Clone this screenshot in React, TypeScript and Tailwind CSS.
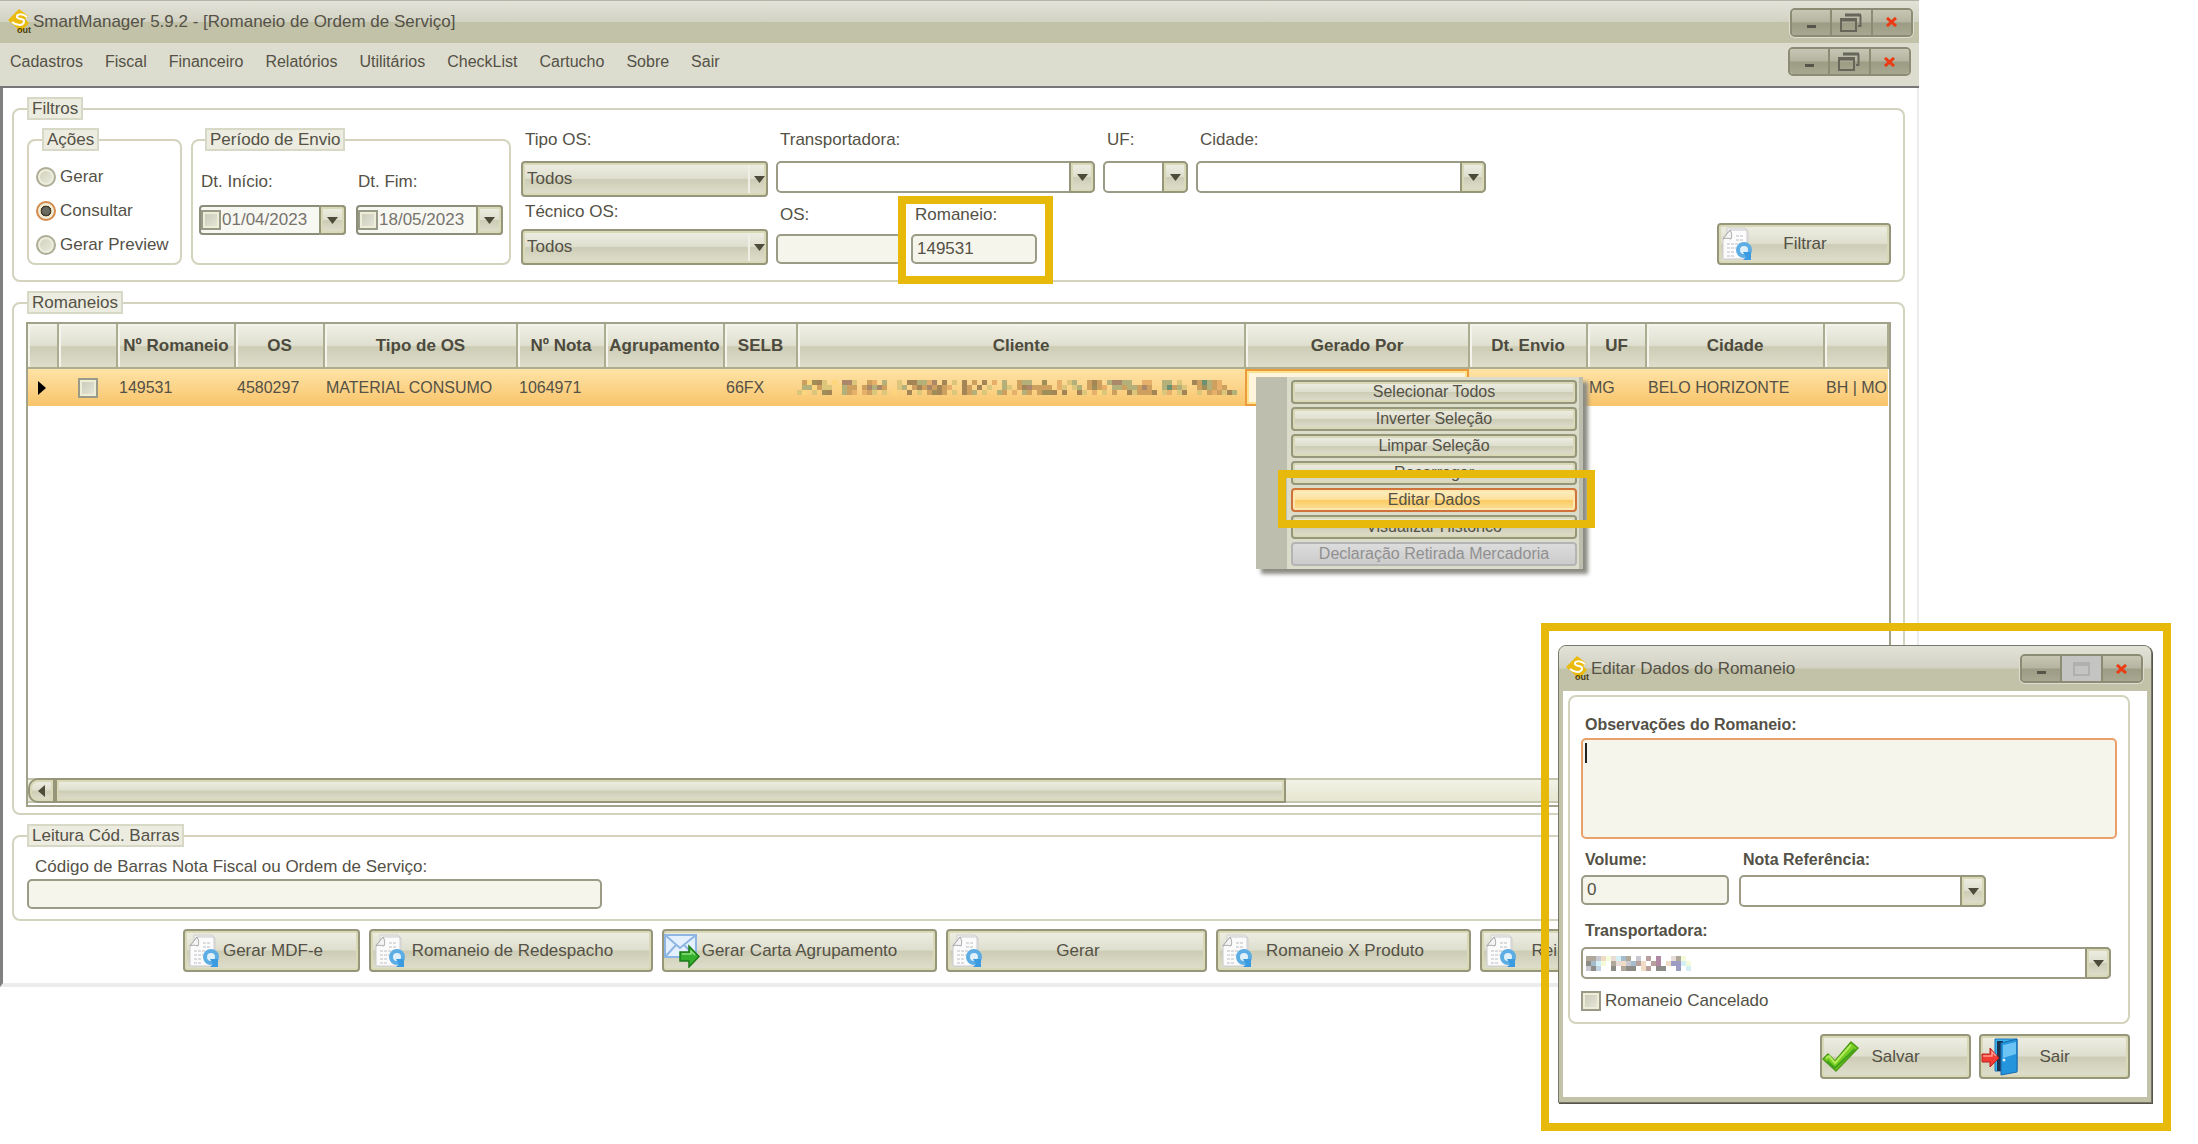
import { ReactNode, useState } from "react";
import clsx from "clsx";

const MENU = [
  "Cadastros",
  "Fiscal",
  "Financeiro",
  "Relatórios",
  "Utilitários",
  "CheckList",
  "Cartucho",
  "Sobre",
  "Sair",
];

const COLUMNS = [
  { label: "", width: "w-[30px]" },
  { label: "", width: "w-[59px]" },
  { label: "Nº Romaneio", width: "w-[118px]" },
  { label: "OS", width: "w-[89px]" },
  { label: "Tipo de OS", width: "w-[193px]" },
  { label: "Nº Nota", width: "w-[88px]" },
  { label: "Agrupamento", width: "w-[119px]" },
  { label: "SELB", width: "w-[73px]" },
  { label: "Cliente", width: "w-[448px]" },
  { label: "Gerado Por", width: "w-[224px]" },
  { label: "Dt. Envio", width: "w-[118px]" },
  { label: "UF", width: "w-[59px]" },
  { label: "Cidade", width: "w-[178px]" },
  { label: "", width: "" },
];

const CONTEXT_MENU = [
  "Selecionar Todos",
  "Inverter Seleção",
  "Limpar Seleção",
  "Recarregar",
  "Editar Dados",
  "Visualizar Histórico",
  "Declaração Retirada Mercadoria",
];

const face =
  "border-2 border-[#96967a] bg-[linear-gradient(#eeeee4,#dfdfcf_48%,#cdcdb6_52%,#dfdfce)] shadow-[inset_0_0_0_2px_#d9d9b8]";
const field =
  "block w-full rounded-[5px] border-2 border-[#9b9b86] px-1 text-[17px] text-[#545146] outline-none";

const MOSAIC_ROWS = [
  ".tyobl.y.rrl..ta.g..l.bbggar.b.l.b.t.b.a.g..tgg..o..a.lg..tbt.grrgg..aa..gg.l..btegta...",
  ".ggytll.ygtt.trgrt..lg.tbtrtbta..bt.b.l..gl.tbrtttt.al.lg.tota.ggtggtrt..getgl..togtat..",
  "ly.l.ob..gta.atl.l.y..b.l.tobt.l.btg.l..gt.a.gt.toob.b..bl.ayl.t..bltttb.la.lb..l.tatlbg",
];

const MOSAIC_COLORS: Record<string, string> = {
  t: "#cda05f",
  y: "#fcd67c",
  o: "#a08e58",
  b: "#a48656",
  l: "#dcc67c",
  r: "#ac886a",
  a: "#e6b06a",
  g: "#b4b07a",
  e: "#6c9074",
};

const LIGHT_MOSAIC_ROWS = [
  "ggxtyplcg.x.r.m..pgy..",
  "bcly.gptxcrt.rm.tvvly.",
  "xbs..b.gbb.tr.bb..v.l.",
];

const LIGHT_MOSAIC_COLORS: Record<string, string> = {
  b: "#8e8c86",
  c: "#a4bccc",
  y: "#f4fbd8",
  g: "#b0a898",
  t: "#f0dcc4",
  l: "#d4f0f4",
  p: "#e8dcd4",
  r: "#b8a09c",
  x: "#c8c8d0",
  m: "#b088a4",
  v: "#9c9cc4",
  s: "#c4d4e4",
};

const Mosaic = ({
  rows,
  colors,
  size,
}: {
  rows: string[];
  colors: Record<string, string>;
  size: number;
}) => (
  <svg
    width={rows[0].length * size}
    height={rows.length * size}
    shapeRendering="crispEdges"
    aria-hidden="true"
  >
    {rows.map((row, y) =>
      row
        .split("")
        .map((key, x) =>
          colors[key] ? (
            <rect
              key={`${x}-${y}`}
              x={x * size}
              y={y * size}
              width={size}
              height={size}
              fill={colors[key]}
            />
          ) : null
        )
    )}
  </svg>
);

const Logo = () => (
  <svg width="24" height="26" viewBox="0 0 24 26" aria-hidden="true">
    <path d="M11 0 20 7 17 10 21 14 13 23 9 19 0 11Z" fill="#eabb0c" />
    <path d="M19 8C14 4 8 5 9 8C10 11 17 9 16 13C15 17 9 17 4 13" fill="none" stroke="#fff" strokeWidth="2" />
    <text
      x="9"
      y="24"
      fontSize="9"
      fontWeight="bold"
      fontFamily="Liberation Sans"
      fill="#4b3c0c"
    >
      out
    </text>
  </svg>
);

const DocIcon = () => (
  <svg width="32" height="34" viewBox="0 0 32 34" aria-hidden="true">
    <path d="M6 1H24L27 4V28H6Z" fill="#f1f1f1" stroke="#cfcfcf" />
    <path d="M9 3H26V32H2V11Z" fill="#fbfbfb" stroke="#cbcbce" />
    <path d="M9 3C11 6 11 9 10 12C7 11 4 11 2 12Z" fill="#f4f4f4" stroke="#a8a8a8" />
    <path
      d="M15 9H23M15 13H23M6 17H22M6 21H15M6 25H14M6 29H14"
      stroke="#dcdce0"
      strokeWidth="2"
      strokeDasharray="3 1"
    />
    <circle cx="23" cy="23" r="6" fill="#dff0fb" stroke="#5cadE4" strokeWidth="4" />
    <path d="M22 25 30 25V33H22L25 30Z" fill="#3a9be0" />
  </svg>
);

const MailIcon = () => (
  <svg width="36" height="34" viewBox="0 0 36 34" aria-hidden="true">
    <rect x="1" y="1" width="31" height="22" fill="#e4f0fd" stroke="#8db6e4" strokeWidth="2" />
    <path
      d="M1 1 16 14 32 1M1 23 12 11M32 23 20 11"
      fill="none"
      stroke="#8db6e4"
      strokeWidth="2"
    />
    <path
      d="M16 18H25V12L35 22.500 25 33V27H16Z"
      fill="#35b02c"
      stroke="#1c7a18"
      strokeWidth="1.500"
    />
    <path d="M18 20H27V17L31 21" fill="none" stroke="#8fe07c" strokeWidth="1.500" />
  </svg>
);

const CheckIcon = () => (
  <svg width="38" height="32" viewBox="0 0 38 32" aria-hidden="true">
    <path
      d="M1 18 6 13 13 20 29 1 36 7 14 30Z"
      fill="#77cc22"
      stroke="#4c9a16"
      strokeWidth="1.500"
      strokeLinejoin="round"
    />
    <path d="M5 20 13 27 33 8" fill="none" stroke="#3fa01c" strokeWidth="2" />
    <path d="M4 17 7 15 13 22 29 4" fill="none" stroke="#b4ec5c" strokeWidth="2" />
  </svg>
);

const DoorIcon = () => (
  <svg width="38" height="38" viewBox="0 0 38 38" aria-hidden="true">
    <path d="M14 1H36V33H14Z" fill="#38b4f0" stroke="#1d72b8" />
    <path d="M16 3H22V33H16Z" fill="#1c3450" />
    <path d="M20 5 36 1V34L20 37Z" fill="#2494dc" stroke="#1769ac" />
    <path d="M22 7 35 4V16L22 20Z" fill="#6cc4f4" />
    <circle cx="23" cy="22" r="1.500" fill="#d4f0ff" />
    <path d="M1 16H9V10L18 20 9 29V24H1Z" fill="#f03c34" stroke="#c02020" />
    <path d="M2 18H11V14L15 18" fill="none" stroke="#ff9a8c" strokeWidth="1.500" />
  </svg>
);

const Arrow = () => (
  <svg width="11" height="7" viewBox="0 0 11 7" aria-hidden="true">
    <path d="M0 0H11L5.500 7Z" fill="#4d4b3a" />
  </svg>
);

const Group = ({
  title,
  className,
  legendClass = "ml-[13px]",
  children,
}: {
  title: string;
  className?: string;
  legendClass?: string;
  children: ReactNode;
}) => (
  <fieldset className={clsx("min-w-0 rounded-[8px] border-2 border-[#d3d3be]", className)}>
    <legend
      className={clsx(
        "h-[23px] border-2 border-[#d8d8c6] bg-[#ecece0] px-[3px] leading-[19px]",
        legendClass
      )}
    >
      {title}
    </legend>
    {children}
  </fieldset>
);

const Check = ({ id, label }: { id: string; label?: string }) => (
  <input
    id={id}
    type="checkbox"
    aria-label={label}
    className="size-5 shrink-0 appearance-none border-2 border-[#9a9a88] bg-[linear-gradient(135deg,#c8c8b6,#e8e8dc)] shadow-[inset_0_0_0_2px_#eeeed8] checked:bg-[#8f8f6e]"
  />
);

/* White combo box with a raised drop-down button on its right */
const Combo = ({ id, children }: { id: string; children?: ReactNode }) => (
  <div className="relative">
    <select id={id} className={clsx(field, "h-8 appearance-none bg-white")}>
      <option value=""></option>
    </select>
    {children}
    <span
      className={clsx(
        "pointer-events-none absolute inset-y-0 right-0 flex w-[26px] items-center justify-center rounded-r-[5px]",
        face
      )}
    >
      <Arrow />
    </span>
  </div>
);

const FlatSelect = ({ id }: { id: string }) => (
  <div className="relative">
    <select
      id={id}
      className={clsx("block h-9 w-full appearance-none rounded-[4px] px-1 outline-none", face)}
    >
      <option>Todos</option>
    </select>
    <span className="pointer-events-none absolute inset-y-1 right-0 flex w-[20px] items-center justify-center border-l-2 border-[#efefe6]">
      <Arrow />
    </span>
  </div>
);

const DateField = ({ id, label, value }: { id: string; label: string; value: string }) => {
  const [date, setDate] = useState(value);

  return (
    <div className="w-[147px]">
      <label htmlFor={id} className="block h-6 pl-[2px] leading-6">
        {label}
      </label>
      <div className="relative mt-[11px] flex h-[30px] items-center rounded-[4px] border-2 border-[#8d8d7b] bg-[#f8f8f3]">
        <Check id={`${id}-check`} label={`Usar ${label}`} />
        <input
          id={id}
          value={date}
          onChange={(e) => setDate(e.target.value)}
          className="w-[98px] bg-transparent pl-px text-[#77746e] outline-none"
        />
        <button
          aria-label={`Abrir calendário ${label}`}
          className={clsx(
            "absolute -inset-y-[2px] -right-[2px] flex w-[27px] items-center justify-center rounded-r-[4px]",
            face
          )}
        >
          <Arrow />
        </button>
      </div>
    </div>
  );
};

const ActionButton = ({
  icon,
  children,
  className,
}: {
  icon: ReactNode;
  children: ReactNode;
  className: string;
}) => (
  <button
    className={clsx(
      "grid shrink-0 grid-cols-1 items-center rounded-[4px] whitespace-nowrap",
      face,
      className
    )}
  >
    <span className="col-start-1 row-start-1 justify-self-start">{icon}</span>
    <span className="col-start-1 row-start-1 justify-self-center">{children}</span>
  </button>
);

const WindowControls = ({ maxDisabled = false }: { maxDisabled?: boolean }) => {
  const cell =
    "flex flex-1 items-center justify-center bg-[linear-gradient(#c6c6b4,#b4b4a0_48%,#9c9c84_52%,#a8a892)]";

  return (
    <div className="flex h-[29px] w-[123px] divide-x-2 divide-[#8c8c74] overflow-hidden rounded-[5px] border-2 border-[#8c8c74] shadow-[0_0_0_1px_#deded0]">
      <button aria-label="Minimizar" className={cell}>
        <span className="mt-2 h-[3px] w-[9px] bg-[#55554a]" />
      </button>
      <button
        aria-label="Restaurar"
        disabled={maxDisabled}
        className={clsx(maxDisabled ? "flex flex-1 items-center justify-center bg-[#c4c4c2]" : cell)}
      >
        {maxDisabled ? (
          <span className="h-[14px] w-[17px] border-2 border-t-4 border-[#b0b0b0]" />
        ) : (
          <svg width="22" height="19" viewBox="0 0 22 19" fill="none" stroke="#66665a" aria-hidden="true">
            <path d="M1 6H16V18H1Z" strokeWidth="2" />
            <path d="M1 7H16M5 2H21" strokeWidth="3" />
            <path d="M20.500 2V13H18" strokeWidth="2" />
          </svg>
        )}
      </button>
      <button aria-label="Fechar" className={cell}>
        <svg width="11" height="10" viewBox="0 0 11 10" aria-hidden="true">
          <path d="M1 1 10 9M10 1 1 9" stroke="#ec3a12" strokeWidth="3" />
        </svg>
      </button>
    </div>
  );
};

const titleBar =
  "bg-[linear-gradient(#e2e2d8,#d2d2c4_49%,#c2c2a9_51%,#c2c2a9)] flex items-center";

const Filters = () => {
  const [action, setAction] = useState("Consultar");
  const [romaneio, setRomaneio] = useState("149531");

  return (
    <Group title="Filtros">
      <div className="flex pt-2 pr-3 pb-[15px] pl-[13px]">
        <Group title="Ações" className="w-[155px]">
          <div className="pt-[9px] pl-[7px]">
            {["Gerar", "Consultar", "Gerar Preview"].map((name) => (
              <label key={name} className="flex h-[34px] items-center gap-1 whitespace-nowrap">
                <input
                  type="radio"
                  name="acao"
                  checked={action === name}
                  onChange={() => setAction(name)}
                  className="size-5 appearance-none rounded-full border-2 border-[#adad98] bg-[linear-gradient(135deg,#cfcfba,#ecece0)] shadow-[inset_0_0_0_2px_#eeeedc] checked:border-[#d38a4c] checked:bg-[radial-gradient(#6b6b60_30%,#2f2f2a_45%,#fbe0a8_50%)]"
                />
                {name}
              </label>
            ))}
          </div>
        </Group>
        <Group title="Período de Envio" className="ml-[9px] w-[320px]" legendClass="ml-3">
          <div className="flex gap-[10px] pt-[19px] pl-[6px]">
            <DateField id="dt-inicio" label="Dt. Início:" value="01/04/2023" />
            <DateField id="dt-fim" label="Dt. Fim:" value="18/05/2023" />
          </div>
        </Group>
        <div className="ml-[10px] w-[247px]">
          <label htmlFor="tipo-os" className="mb-[9px] block h-6 pl-1 leading-6">
            Tipo OS:
          </label>
          <FlatSelect id="tipo-os" />
          <label htmlFor="tecnico-os" className="mt-[3px] mb-[5px] block h-6 pl-1 leading-6">
            Técnico OS:
          </label>
          <FlatSelect id="tecnico-os" />
        </div>
        <div className="ml-2">
          <div className="flex gap-2">
            <div className="w-[319px]">
              <label htmlFor="transportadora" className="mb-[9px] block h-6 pl-1 leading-6">
                Transportadora:
              </label>
              <Combo id="transportadora" />
            </div>
            <div className="w-[85px]">
              <label htmlFor="uf" className="mb-[9px] block h-6 pl-1 leading-6">
                UF:
              </label>
              <Combo id="uf" />
            </div>
            <div className="w-[290px]">
              <label htmlFor="cidade" className="mb-[9px] block h-6 pl-1 leading-6">
                Cidade:
              </label>
              <Combo id="cidade" />
            </div>
          </div>
          <div className="mt-[10px] flex gap-[9px]">
            <div className="w-[126px]">
              <label htmlFor="os" className="mb-[7px] block h-6 pl-1 leading-6">
                OS:
              </label>
              <input id="os" className={clsx(field, "h-[30px] bg-[#f5f5ec]")} />
            </div>
            <div className="relative w-[126px]">
              <label htmlFor="romaneio" className="mb-[7px] block h-6 pl-1 leading-6">
                Romaneio:
              </label>
              <input
                id="romaneio"
                value={romaneio}
                onChange={(e) => setRomaneio(e.target.value)}
                className={clsx(field, "h-[30px] bg-[#f5f5ec]")}
              />
              <div className="pointer-events-none absolute -top-[7px] -right-[16px] -bottom-5 -left-[13px] border-8 border-[#e7b90a]" />
            </div>
          </div>
        </div>
        <ActionButton icon={<DocIcon />} className="ml-auto h-[42px] w-[174px] self-end pl-[2px]">
          Filtrar
        </ActionButton>
      </div>
    </Group>
  );
};

const ContextMenu = () => (
  <div className="absolute top-[53px] left-[1228px] w-[327px] border-r-4 border-l-[31px] border-[#bebeae] bg-[#dcdccb] py-[3px] pr-[2px] pl-1 shadow-[5px_5px_4px_#8c8c84]">
    <div className="flex flex-col gap-[3px]">
      {CONTEXT_MENU.map((item) => (
        <button
          key={item}
          disabled={item.startsWith("Declaração")}
          className={clsx(
            "h-6 rounded-[4px] text-[16px] leading-5 whitespace-nowrap",
            item === "Editar Dados"
              ? "border-2 border-[#d0733a] bg-[linear-gradient(#fff0c4,#fde09a_48%,#fbcb62_52%,#fde09a)] shadow-[inset_0_0_0_2px_#fbe6ae]"
              : item.startsWith("Declaração")
                ? "border-2 border-[#b4b4b4] bg-[linear-gradient(#dcdcdc,#cccccc)] text-[#909090]"
                : face
          )}
        >
          {item}
        </button>
      ))}
    </div>
    <div className="pointer-events-none absolute top-[93px] -right-[16px] -left-[9px] h-[58px] border-8 border-[#e7b90a]" />
  </div>
);

const RomaneioTable = () => (
  <div className="relative border-2 border-[#a2a28a]">
    <div className="h-[454px] overflow-hidden">
      <table className="w-full table-fixed border-collapse whitespace-nowrap">
        <thead>
          <tr className="h-[44px] bg-[linear-gradient(#f0f0e8,#e0e0d0_48%,#cdcdb6_52%,#dedecb)]">
            {COLUMNS.map((column, i) => (
              <th
                key={i}
                scope="col"
                className={clsx(
                  "overflow-hidden border-r-2 border-b-2 border-[#acac90] p-0 text-center text-[17px] font-bold text-[#4d4a3e] shadow-[inset_2px_2px_0_#f4f4ec]",
                  column.width
                )}
              >
                {column.label}
              </th>
            ))}
          </tr>
        </thead>
        <tbody>
          <tr className="h-[38px] bg-[linear-gradient(#fee4a8,#fbd184_60%,#f8c468)] text-[16px]">
            <td className="p-0">
              <svg width="8" height="14" viewBox="0 0 8 14" className="ml-[10px]" aria-hidden="true">
                <path d="M0 0 8 7 0 14Z" fill="#000" />
              </svg>
            </td>
            <td className="p-0">
              <div className="flex justify-center">
                <Check id="sel-149531" label="Selecionar romaneio 149531" />
              </div>
            </td>
            <td className="p-0 pl-[2px]">149531</td>
            <td className="p-0 pl-[2px]">4580297</td>
            <td className="p-0 pl-[2px]">MATERIAL CONSUMO</td>
            <td className="p-0 pl-[2px]">1064971</td>
            <td className="p-0"></td>
            <td className="p-0 pl-[2px]">66FX</td>
            <td className="p-0">
              <Mosaic rows={MOSAIC_ROWS} colors={MOSAIC_COLORS} size={5} />
            </td>
            <td className="p-0">
              <div className="h-[37px] border-2 border-[#eb9a3c] bg-[#fff4dc] shadow-[inset_0_0_0_2px_#fde28c]" />
            </td>
            <td className="p-0"></td>
            <td className="p-0 pl-[2px]">MG</td>
            <td className="p-0 pl-[2px]">BELO HORIZONTE</td>
            <td className="overflow-hidden p-0 pl-[2px]">BH | MO</td>
          </tr>
        </tbody>
      </table>
    </div>
    <div className="mb-[2px] flex h-[25px] border-y-2 border-[#c6c6ae] bg-[linear-gradient(#f2f2e6,#e6e6d2)]">
      <button
        aria-label="Rolar para a esquerda"
        className={clsx("-my-[2px] flex w-[27px] items-center justify-center rounded-l-[10px]", face)}
      >
        <svg width="7" height="12" viewBox="0 0 7 12" aria-hidden="true">
          <path d="M7 0V12L0 6Z" fill="#4d4b3a" />
        </svg>
      </button>
      <div className={clsx("-my-[2px] w-[1231px]", face)} />
    </div>
    <ContextMenu />
  </div>
);

const EditDialog = () => (
  <div className="absolute top-[623px] right-[27px] w-[630px] border-8 border-[#e7b90a] pt-[14px] pr-[11px] pb-5 pl-[9px]">
    <section
      aria-label="Editar Dados do Romaneio"
      className="rounded-t-[8px] border border-[#77776a] bg-[#c2c2a9] shadow-[1px_1px_0_#55554a]"
    >
      <header className={clsx("h-[45px] rounded-t-[7px] pr-2 pl-[7px]", titleBar)}>
        <Logo />
        <h2 className="mr-auto pl-px">Editar Dados do Romaneio</h2>
        <WindowControls maxDisabled />
      </header>
      <div className="mx-1 mb-[5px] bg-white pt-1 pb-[18px] pl-[5px]">
        <div className="mr-[17px] rounded-[8px] border-2 border-[#d3d3be] px-[11px] pt-4 pb-[9px]">
          <label htmlFor="obs" className="block h-6 pl-1 text-[16px] leading-6 font-bold">
            Observações do Romaneio:
          </label>
          <div className="relative mt-px">
            <textarea
              id="obs"
              className="block h-[101px] w-full resize-none rounded-[5px] border-2 border-[#e9a06a] bg-[#f5f5ec] px-1 outline-none"
            />
            <span className="absolute top-[5px] left-1 h-5 w-[2px] bg-[#222]" />
          </div>
          <div className="mt-[9px] flex gap-[10px]">
            <div className="w-[148px]">
              <label htmlFor="volume" className="mb-[3px] block h-6 pl-1 text-[16px] leading-6 font-bold">
                Volume:
              </label>
              <input id="volume" defaultValue="0" className={clsx(field, "h-[30px] bg-[#f5f5ec]")} />
            </div>
            <div className="w-[247px]">
              <label htmlFor="nota-ref" className="mb-[3px] block h-6 pl-1 text-[16px] leading-6 font-bold">
                Nota Referência:
              </label>
              <Combo id="nota-ref" />
            </div>
          </div>
          <label
            htmlFor="transp-edit"
            className="mt-3 mb-1 block h-6 pl-1 text-[16px] leading-6 font-bold"
          >
            Transportadora:
          </label>
          <div className="mr-[6px]">
            <Combo id="transp-edit">
              <div className="pointer-events-none absolute top-[9px] left-[5px]">
                <Mosaic rows={LIGHT_MOSAIC_ROWS} colors={LIGHT_MOSAIC_COLORS} size={5} />
              </div>
            </Combo>
          </div>
          <div className="mt-[10px] flex h-6 items-center gap-1">
            <Check id="cancelado" />
            <label htmlFor="cancelado">Romaneio Cancelado</label>
          </div>
        </div>
        <div className="mt-[10px] mr-[17px] flex justify-end gap-2">
          <ActionButton icon={<CheckIcon />} className="h-[45px] w-[151px]">
            Salvar
          </ActionButton>
          <ActionButton icon={<DoorIcon />} className="h-[45px] w-[151px]">
            Sair
          </ActionButton>
        </div>
      </div>
    </section>
  </div>
);

const App = () => {
  return (
    <div className="relative min-h-screen overflow-hidden bg-white font-['Liberation_Sans',Arial,sans-serif] text-[17px] leading-6 text-[#545146]">
      <main className="mr-[279px]">
        <header className={clsx("h-[43px] border-t border-[#b4b4a8] pr-[6px] pl-2", titleBar)}>
          <Logo />
          <h1 className="mr-auto pl-px">SmartManager 5.9.2 - [Romaneio de Ordem de Serviço]</h1>
          <WindowControls />
        </header>
        <div className="flex h-[45px] items-center border-b-2 border-[#77777a] bg-[#ddddcf] pr-2 pl-[10px]">
          <nav className="mr-auto flex gap-[22px] pb-[6px] text-[16px]">
            {MENU.map((item) => (
              <a key={item} href="#">
                {item}
              </a>
            ))}
          </nav>
          <div className="pb-[6px]">
            <WindowControls />
          </div>
        </div>
        <div className="border-r-2 border-b-4 border-l-[3px] border-r-[#ececec] border-b-[#ececec] border-l-[#808080] pt-[9px] pr-3 pb-[11px] pl-[9px]">
          <Filters />
          <Group title="Romaneios" className="mt-[9px]">
            <div className="px-3 pt-2 pb-[6px]">
              <RomaneioTable />
            </div>
          </Group>
          <Group title="Leitura Cód. Barras" className="mt-[9px]">
            <div className="px-[13px] pt-2 pb-[10px]">
              <label htmlFor="barras" className="block h-6 pl-2 leading-6">
                Código de Barras Nota Fiscal ou Ordem de Serviço:
              </label>
              <div className="w-[575px]">
                <input id="barras" className={clsx(field, "h-[30px] bg-[#f5f5ec]")} />
              </div>
            </div>
          </Group>
          <div className="mt-2 flex gap-[9px] pl-[171px]">
            <ActionButton icon={<DocIcon />} className="h-[43px] w-[177px] pl-[3px]">
              Gerar MDF-e
            </ActionButton>
            <ActionButton icon={<DocIcon />} className="h-[43px] w-[284px] pl-[3px]">
              Romaneio de Redespacho
            </ActionButton>
            <ActionButton icon={<MailIcon />} className="h-[43px] w-[275px]">
              Gerar Carta Agrupamento
            </ActionButton>
            <ActionButton icon={<DocIcon />} className="h-[43px] w-[261px] pl-[3px]">
              Gerar
            </ActionButton>
            <ActionButton icon={<DocIcon />} className="h-[43px] w-[255px] pl-[3px]">
              Romaneio X Produto
            </ActionButton>
            <ActionButton icon={<DocIcon />} className="h-[43px] w-[182px] pl-[3px]">
              Reimprimir
            </ActionButton>
          </div>
        </div>
      </main>
      <EditDialog />
    </div>
  );
};

export default App;
